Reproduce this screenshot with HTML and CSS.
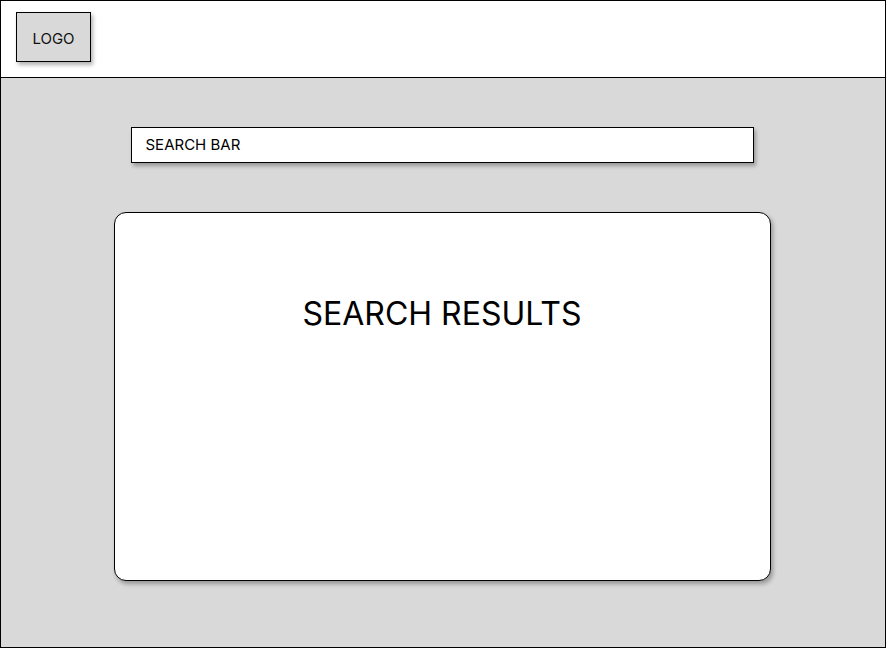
FILE: index.html
```html
<!DOCTYPE html>
<html>
<head>
<meta charset="utf-8">
<link rel="stylesheet" href="styles.css">
</head>
<body>
<div class="frame">
  <header class="header">
    <div class="logo">LOGO</div>
  </header>
  <main class="main">
    <div class="search">SEARCH BAR</div>
    <section class="results">
      <h1 class="results-title">SEARCH RESULTS</h1>
    </section>
  </main>
</div>
</body>
</html>
```
FILE: styles.css
```css
html, body {
  margin: 0;
  padding: 0;
}
body {
  font-family: Inter, "Liberation Sans", sans-serif;
  color: #000;
}
.frame {
  width: 886px;
  height: 648px;
  box-sizing: border-box;
  border: 1px solid #000;
  display: flex;
  flex-direction: column;
  background: #d9d9d9;
}
.header {
  flex: none;
  background: #fff;
  border-bottom: 1px solid #000;
  padding: 11px 0 0 15px;
  box-sizing: content-box;
  height: 65px;
}
.logo {
  width: 73px;
  height: 46px;
  padding-top: 2px;
  border: 1px solid #000;
  background: #d9d9d9;
  box-shadow: 2px 3px 4px rgba(0,0,0,0.3);
  display: flex;
  align-items: center;
  justify-content: center;
  font-size: 15px;
  color: #111;
}
.main {
  flex: 1;
  display: flex;
  flex-direction: column;
  align-items: center;
  padding-top: 49px;
}
.search {
  height: 33px;
  padding-bottom: 1px;
  border: 1px solid #000;
  background: #fff;
  box-shadow: 2px 3px 4px rgba(0,0,0,0.3);
  display: flex;
  align-items: center;
  padding-left: 14px;
  box-sizing: content-box;
  width: 607px;
  font-size: 15px;
  margin-left: -2px;
}
.results {
  margin-top: 49px;
  width: 655px;
  height: 367px;
  border: 1px solid #000;
  border-radius: 12px;
  background: #fff;
  box-shadow: 2px 3px 4px rgba(0,0,0,0.3);
  margin-left: -2px;
  box-sizing: content-box;
}
.results-title {
  margin: 0;
  padding-top: 82px;
  font-weight: 400;
  font-size: 32px;
  line-height: 38px;
  text-align: center;
}
```
